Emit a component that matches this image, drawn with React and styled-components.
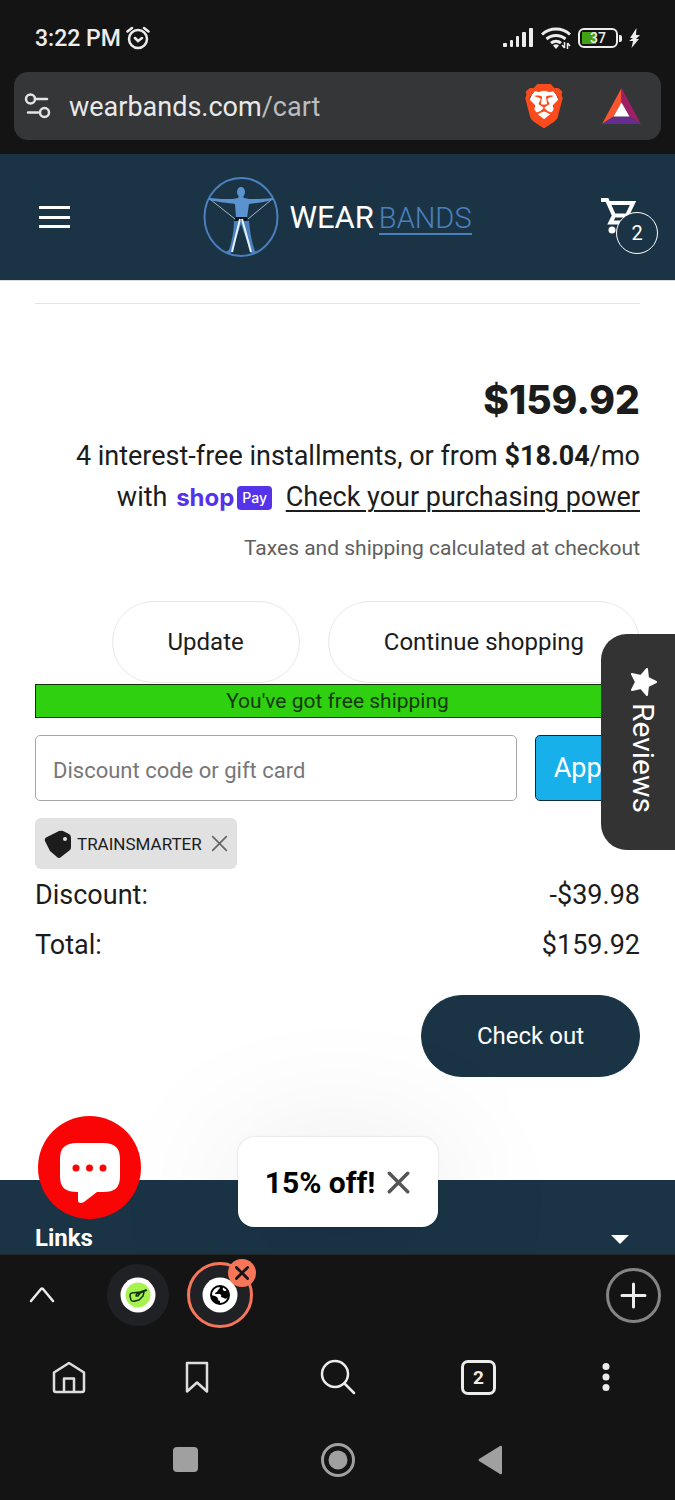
import React, { useState } from 'react';
import styled, { createGlobalStyle } from 'styled-components';
import { SiBrave } from 'react-icons/si';

const GlobalStyle = createGlobalStyle`
  * {
    box-sizing: border-box;
  }
  body {
    margin: 0;
    background-color: #141414;
    font-family: Roboto, 'Liberation Sans', sans-serif;
    color: #1c1c1c;
  }
  button,
  input {
    font-family: inherit;
  }
  svg {
    display: block;
    flex-shrink: 0;
  }
`;

const Screen = styled.div`
  display: flex;
  flex-direction: column;
  min-height: 100vh;
`;

const StatusBar = styled.div`
  display: flex;
  align-items: center;
  justify-content: space-between;
  height: 72px;
  padding: 4px 35px 0;
  color: #ececec;
`;

const StatusGroup = styled.div`
  display: flex;
  align-items: center;
  gap: ${(props) => props.$gap}px;
  font-size: 23px;
  font-weight: 500;
`;

const Battery = styled.div`
  display: flex;
  align-items: center;
  gap: 1px;
`;

const BatteryBody = styled.div`
  display: flex;
  align-items: center;
  justify-content: center;
  width: 40px;
  height: 20px;
  border: 2px solid #ececec;
  border-radius: 6px;
  background: linear-gradient(90deg, #43a012 14px, transparent 14px) no-repeat 2px 2px / 32px 12px;
  font-size: 14px;
  font-weight: 500;
  line-height: 16px;
`;

const BatteryTip = styled.div`
  width: 3px;
  height: 7px;
  border-radius: 0 2px 2px 0;
  background-color: #ececec;
`;

const AddressBar = styled.div`
  display: flex;
  align-items: center;
  height: 68px;
  margin: 0 14px 14px;
  padding: 0 20px 0 10px;
  border-radius: 14px;
  background-color: #343638;
`;

const IconButton = styled.button`
  display: flex;
  align-items: center;
  justify-content: center;
  padding: 0;
  border: none;
  background: none;
  color: inherit;
  cursor: pointer;
`;

const Address = styled.div`
  flex: 1;
  margin-left: 17px;
  padding-top: 2px;
  color: #e9e9e9;
  font-size: 27px;
  span {
    color: #bcbdbe;
  }
`;

const AddressActions = styled.div`
  display: flex;
  align-items: center;
  gap: 36px;
`;

const BraveIcon = styled.div`
  display: flex;
  justify-content: center;
  color: #fb4a1c;
  background: radial-gradient(ellipse 15px 18px at 50% 48%, #fff 98%, transparent);
`;

const WebView = styled.div`
  position: relative;
  display: flex;
  flex: 1;
  flex-direction: column;
  overflow: hidden;
  background-color: #fff;
`;

const Header = styled.header`
  display: grid;
  grid-template-columns: 1fr auto 1fr;
  align-items: center;
  height: 127px;
  padding: 0 17px;
  background-color: #1a3446;
  border-bottom: 1px solid #d9dcdf;
  color: #fff;
`;

const MenuButton = styled(IconButton)`
  justify-self: start;
  margin-left: 21px;
`;

const Logo = styled.a`
  display: flex;
  align-items: center;
  color: #fff;
  text-decoration: none;
`;

const LogoText = styled.span`
  display: flex;
  align-items: flex-start;
  gap: 5px;
  margin-left: 9px;
  padding-top: 4px;
  font-size: 31px;
  font-weight: 400;
  line-height: 30px;
`;

const LogoSecond = styled.span`
  border-bottom: 2px solid #4b80bd;
  color: #4b80bd;
  font-size: 29px;
  font-weight: 300;
`;

const CartLink = styled.a`
  position: relative;
  justify-self: end;
  width: 58px;
  height: 74px;
  padding-top: 17px;
  color: #fff;
  text-decoration: none;
`;

const CartCount = styled.span`
  position: absolute;
  right: 0;
  bottom: 0;
  display: flex;
  align-items: center;
  justify-content: center;
  width: 42px;
  height: 42px;
  border: 1px solid #fff;
  border-radius: 50%;
  background-color: #1a3446;
  font-size: 20px;
`;

const Cart = styled.main`
  flex: 1;
  padding: 22px 35px 103px;
`;

const Divider = styled.hr`
  height: 1px;
  margin: 0 0 71px;
  border: none;
  background-color: #e4e4e4;
`;

const Price = styled.div`
  margin-bottom: 11px;
  font-family: Inter, Roboto, sans-serif;
  font-size: 39px;
  font-weight: 800;
  line-height: 50px;
  text-align: right;
`;

const Installments = styled.div`
  font-size: 27px;
  line-height: 41px;
  text-align: right;
  a {
    color: inherit;
    text-decoration-thickness: 2px;
    text-underline-offset: 4px;
  }
`;

const ShopPay = styled.span`
  display: inline-flex;
  align-items: center;
  gap: 3px;
  margin: 0 7px 0 2px;
  color: #5433eb;
  font-family: Inter, sans-serif;
  font-size: 24px;
  font-weight: 700;
  line-height: 24px;
`;

const PayBadge = styled.span`
  padding: 0 5px;
  border-radius: 4px;
  background-color: #5433eb;
  color: #fff;
  font-size: 14px;
  font-weight: 500;
`;

const Note = styled.p`
  margin: 15px 0 38px;
  color: #606060;
  font-size: 21px;
  line-height: 30px;
  text-align: right;
`;

const ButtonRow = styled.div`
  display: flex;
  justify-content: flex-end;
  gap: 28px;
`;

const PillButton = styled.button`
  height: 82px;
  padding: 0 55px;
  border: 1px solid ${(props) => (props.$filled ? '#1a3446' : '#e8e8e8')};
  border-radius: 41px;
  background-color: ${(props) => (props.$filled ? '#1a3446' : '#fff')};
  color: ${(props) => (props.$filled ? '#fff' : '#1c1c1c')};
  font-size: 24px;
  cursor: pointer;
`;

const ShippingBar = styled.div`
  margin: 1px 0 17px;
  border: 1px solid #10300a;
  background-color: #2fd010;
  color: #16380e;
  font-size: 21px;
  line-height: 32px;
  text-align: center;
`;

const DiscountForm = styled.form`
  display: flex;
  gap: 18px;
`;

const DiscountInput = styled.input`
  flex: 1;
  min-width: 0;
  height: 66px;
  padding: 4px 17px 0;
  border: 1px solid #a6a6a6;
  border-radius: 5px;
  color: #1c1c1c;
  font-size: 22px;
  &::placeholder {
    color: #777;
  }
`;

const ApplyButton = styled.button`
  height: 66px;
  padding: 0 18px;
  border: 1px solid #0c2c3c;
  border-radius: 5px;
  background-color: #17b0ea;
  color: #fff;
  font-size: 27px;
  cursor: pointer;
`;

const Coupon = styled.div`
  display: flex;
  align-items: center;
  gap: 5px;
  width: fit-content;
  height: 51px;
  margin: 17px 0 1px;
  padding: 0 9px;
  border-radius: 6px;
  background-color: #e1e1e1;
  font-size: 17px;
  button {
    margin-left: 4px;
  }
`;

const TotalRow = styled.div`
  display: flex;
  justify-content: space-between;
  font-size: 27px;
  line-height: 50px;
`;

const CheckoutRow = styled.div`
  display: flex;
  justify-content: flex-end;
  margin-top: 25px;
`;

const FooterLinks = styled.button`
  display: flex;
  align-items: flex-end;
  justify-content: space-between;
  height: 74px;
  padding: 0 46px 1px 35px;
  border: none;
  background-color: #1a3446;
  color: #fff;
  font-size: 24px;
  font-weight: 700;
  line-height: 30px;
`;

const Caret = styled.span`
  margin-bottom: 9px;
  border-top: 9px solid #fff;
  border-right: 9px solid transparent;
  border-left: 9px solid transparent;
`;

const ReviewsTab = styled.button`
  position: absolute;
  top: 480px;
  right: 0;
  display: flex;
  align-items: center;
  justify-content: center;
  gap: 6px;
  width: 74px;
  height: 216px;
  padding: 0 0 4px 9px;
  border: none;
  border-radius: 26px 0 0 26px;
  background-color: #333;
  color: #fff;
  font-size: 30px;
  line-height: 34px;
  writing-mode: vertical-rl;
`;

const ChatButton = styled.button`
  position: absolute;
  bottom: 35px;
  left: 38px;
  width: 103px;
  height: 103px;
  padding: 0;
  border: none;
  border-radius: 50%;
  background-color: #f90505;
`;

const Promo = styled.div`
  position: absolute;
  bottom: 27px;
  left: 50%;
  display: flex;
  align-items: center;
  justify-content: center;
  gap: 12px;
  width: 200px;
  height: 90px;
  border-radius: 16px;
  background-color: #fff;
  box-shadow: 0 0 2px rgba(0, 0, 0, 0.2), 0 20px 150px rgba(0, 0, 0, 0.12);
  color: #000;
  font-size: 30px;
  font-weight: 700;
  transform: translateX(-50%);
`;

const BrowserBar = styled.div`
  border-top: 1px solid #23272a;
  color: #ececec;
`;

const TabStrip = styled.div`
  display: flex;
  align-items: center;
  height: 80px;
  padding: 0 14px 0 29px;
`;

const Tab = styled.button`
  position: relative;
  display: flex;
  align-items: center;
  justify-content: center;
  width: ${(props) => (props.$active ? 66 : 62)}px;
  height: ${(props) => (props.$active ? 66 : 62)}px;
  margin-left: ${(props) => (props.$active ? 18 : 52)}px;
  padding: 0;
  border: ${(props) => (props.$active ? '3px solid #f7765a' : 'none')};
  border-radius: 50%;
  background-color: #202124;
`;

const CloseBadge = styled.span`
  position: absolute;
  top: -6px;
  right: -6px;
  display: flex;
  align-items: center;
  justify-content: center;
  width: 28px;
  height: 28px;
  border-radius: 50%;
  background-color: #f7765a;
`;

const NewTab = styled(IconButton)`
  width: 55px;
  height: 55px;
  margin-left: auto;
  border: 3px solid #848484;
  border-radius: 50%;
`;

const Toolbar = styled.nav`
  display: flex;
  align-items: center;
  justify-content: space-between;
  height: 84px;
  padding: 0 51px;
`;

const ToolbarButton = styled(IconButton)`
  width: ${(props) => (props.$wide ? 62 : 36)}px;
`;

const TabCount = styled(IconButton)`
  width: 35px;
  height: 35px;
  border: 3px solid #ececec;
  border-radius: 7px;
  font-size: 19px;
  font-weight: 700;
`;

const SystemNav = styled.div`
  display: flex;
  align-items: center;
  justify-content: center;
  gap: 123px;
  height: 81px;
  color: #a0a0a0;
`;

function CloseIcon({ size, color, width }) {
  return (
    <svg width={size} height={size} viewBox="0 0 20 20" fill="none" stroke={color} strokeWidth={width} strokeLinecap="round">
      <path d="M2 2l16 16M18 2L2 18" />
    </svg>
  );
}

function SignalIcons() {
  return (
    <>
      <svg width="31" height="20" viewBox="0 0 31 20" fill="#ececec">
        <rect x="0" y="15" width="4" height="4" rx="1" />
        <rect x="7" y="12" width="3" height="7" rx="1" />
        <rect x="13" y="8" width="3" height="11" rx="1" />
        <rect x="19" y="4" width="4" height="15" rx="1" />
        <rect x="26" y="0" width="4" height="19" rx="1" />
      </svg>
      <svg width="30" height="22" viewBox="0 0 30 22" fill="none" stroke="#ececec" strokeWidth="3">
        <path d="M1 7.500C9 .2 21 .2 29 7.500" />
        <path d="M5.500 12C11 7.200 19 7.200 24.500 12" />
        <path d="M10 16.200C13 13.700 17 13.700 20 16.200" />
        <path d="M12 18.500a4 4 0 0 1 6 0L15 22z" fill="#ececec" stroke="none" />
        <path d="M23.500 15v6M21 18l2.500 3M26.500 22v-6M29 19l-2.500-3" strokeWidth="1.500" />
      </svg>
    </>
  );
}

function LogoFigure() {
  return (
    <svg width="77" height="82" viewBox="0 0 77 82" fill="none">
      <ellipse cx="38" cy="41" rx="36.500" ry="39" stroke="#4b80bd" strokeWidth="2" />
      <path d="M8 24l24 19M68 24L45 43" stroke="#a9b7bd" strokeWidth="1" />
      <ellipse cx="38" cy="16" rx="4" ry="5" fill="#5b92d0" />
      <path d="M36 20h4l1 2 5 1c8 0 16 0 24-1v2c-8 2-17 3-24 4l-2 14H33l-1-14C25 27 15 26 6 24v-2c9 1 17 1 24 1l5-1z" fill="#5b92d0" />
      <path d="M31 45h15c1 11 3 22 6 30l4 2h-8L38 48 28 77h-7l5-3c3-9 5-20 5-29z" fill="#4b80bd" />
      <path d="M32 41h12v4H32z" fill="#0b1420" />
      <path d="M37 43l-8 33M39 43l9 33" stroke="#e5f2fa" strokeWidth="2" />
    </svg>
  );
}

function App() {
  const [code, setCode] = useState('');

  const handleSubmit = (event) => {
    event.preventDefault();
  };

  return (
    <Screen>
      <GlobalStyle />
      <StatusBar>
        <StatusGroup $gap={5}>
          <span>3:22 PM</span>
          <svg width="24" height="24" viewBox="0 0 24 24" fill="none" stroke="#ececec" strokeWidth="2.500" strokeLinecap="round">
            <circle cx="12" cy="13" r="9" />
            <path d="M1.500 5.500L6 2M22.500 5.500L18 2M9 12l3 3 4-3" />
          </svg>
        </StatusGroup>
        <StatusGroup $gap={7}>
          <SignalIcons />
          <Battery>
            <BatteryBody>37</BatteryBody>
            <BatteryTip />
          </Battery>
          <svg width="11" height="20" viewBox="0 0 11 20" fill="#ececec">
            <path d="M7.500 0L1 10h3L0 13h4l-1.500 7L10 11H7l4-4H7z" />
          </svg>
        </StatusGroup>
      </StatusBar>

      <AddressBar>
        <IconButton aria-label="Site settings">
          <svg width="28" height="26" viewBox="0 0 28 26" fill="none" stroke="#e4e4e4" strokeWidth="2.500" strokeLinecap="round">
            <circle cx="6.500" cy="6" r="4.500" />
            <path d="M12 6h11M4 19.500h10" />
            <circle cx="20.500" cy="19.500" r="4.500" />
          </svg>
        </IconButton>
        <Address>
          wearbands.com<span>/cart</span>
        </Address>
        <AddressActions>
          <IconButton aria-label="Brave Shields">
            <BraveIcon>
              <SiBrave size={44} />
            </BraveIcon>
          </IconButton>
          <IconButton aria-label="Rewards">
            <svg width="39" height="36" viewBox="0 0 39 36">
              <path d="M19.500 0L0 36l11.500-7.500 8-14z" fill="#fb5430" />
              <path d="M19.500 0L39 36l-11.500-7.500-8-14z" fill="#9e1f63" />
              <path d="M0 36h39l-11.500-7.500h-16z" fill="#662d91" />
              <path d="M19.500 14.500l8 14h-16z" fill="#fff" />
            </svg>
          </IconButton>
        </AddressActions>
      </AddressBar>

      <WebView>
        <Header>
          <MenuButton aria-label="Menu">
            <svg width="33" height="24" viewBox="0 0 33 24" stroke="#fff" strokeWidth="3">
              <path d="M1 2.500h31M1 12.500h31M1 21.500h31" />
            </svg>
          </MenuButton>
          <Logo href="#">
            <LogoFigure />
            <LogoText>
              WEAR
              <LogoSecond>BANDS</LogoSecond>
            </LogoText>
          </Logo>
          <CartLink href="#" aria-label="Cart">
            <svg width="38" height="38" viewBox="0 0 38 38" fill="none" stroke="#fff" strokeWidth="4">
              <path d="M1 3h6L14 18.500H27L33 6H9M14 18.500L10.500 25.500H31" />
              <circle cx="12" cy="33" r="3.500" fill="#fff" stroke="none" />
            </svg>
            <CartCount>2</CartCount>
          </CartLink>
        </Header>

        <Cart>
          <Divider />
          <Price>$159.92</Price>
          <Installments>
            4 interest-free installments, or from <b>$18.04</b>/mo
            <br />
            with{' '}
            <ShopPay>
              shop
              <PayBadge>Pay</PayBadge>
            </ShopPay>{' '}
            <a href="#">Check your purchasing power</a>
          </Installments>
          <Note>Taxes and shipping calculated at checkout</Note>
          <ButtonRow>
            <PillButton>Update</PillButton>
            <PillButton>Continue shopping</PillButton>
          </ButtonRow>
          <ShippingBar>You've got free shipping</ShippingBar>
          <DiscountForm onSubmit={handleSubmit}>
            <DiscountInput
              type="text"
              aria-label="Discount code or gift card"
              placeholder="Discount code or gift card"
              value={code}
              onChange={(event) => setCode(event.target.value)}
            />
            <ApplyButton type="submit">Apply</ApplyButton>
          </DiscountForm>
          <Coupon>
            <svg width="28" height="28" viewBox="0 0 28 28">
              <path d="M1 11Q0 8 3 7L15 1Q18 0 21 2l4 2q2 1 2 4v9q0 2-1 3l-9 7q-2 2-4 0L6 21z" fill="#1c1c1c" />
              <circle cx="21" cy="9" r="2" fill="#e1e1e1" />
            </svg>
            TRAINSMARTER
            <IconButton aria-label="Remove discount">
              <CloseIcon size={17} color="#666" width={2} />
            </IconButton>
          </Coupon>
          <TotalRow>
            <span>Discount:</span>
            <span>-$39.98</span>
          </TotalRow>
          <TotalRow>
            <span>Total:</span>
            <span>$159.92</span>
          </TotalRow>
          <CheckoutRow>
            <PillButton $filled>Check out</PillButton>
          </CheckoutRow>
        </Cart>

        <FooterLinks>
          Links
          <Caret />
        </FooterLinks>

        <Promo>
          15% off!
          <IconButton aria-label="Close offer">
            <CloseIcon size={23} color="#555" width={3} />
          </IconButton>
        </Promo>
        <ChatButton aria-label="Chat">
          <svg width="103" height="103" viewBox="0 0 103 103" fill="#fff">
            <path d="M39 27h26c12 0 17 5 17 16v17c0 12-5 16-17 16h-6L46 86c-4 2-6 1-6-2v-8c-13 0-18-4-18-16V43c0-11 5-16 17-16z" />
            <g fill="#f90505">
              <circle cx="38" cy="52" r="3.500" />
              <circle cx="51.500" cy="52" r="3.500" />
              <circle cx="65" cy="52" r="3.500" />
            </g>
          </svg>
        </ChatButton>
        <ReviewsTab>
          <svg width="28" height="30" viewBox="0 0 28 30" fill="#fff" stroke="#fff" strokeWidth="2" strokeLinejoin="round">
            <path d="M27 15l-8 4-1 9-6-7-9 2 4-8-4-8 9 2 6-7 1 9z" />
          </svg>
          Reviews
        </ReviewsTab>
      </WebView>

      <BrowserBar>
        <TabStrip>
          <IconButton aria-label="Expand tabs">
            <svg width="26" height="18" viewBox="0 0 26 18" fill="none" stroke="#ececec" strokeWidth="2.500" strokeLinecap="round">
              <path d="M2 15L12 3q1-1 2 0l10 12" />
            </svg>
          </IconButton>
          <Tab aria-label="First tab">
            <svg width="36" height="36" viewBox="0 0 36 36">
              <circle cx="18" cy="18" r="17.500" fill="#fff" />
              <circle cx="18" cy="18" r="12.500" fill="#a6f34f" />
              <path
                d="M26 13l-6 2-8 1q-2 0-2 3l1 4q1 2 4 1l4-1 4-4 1-4q-2-1-4 1l-2 3h-2q0-3 4-3l7-3"
                fill="none"
                stroke="#14310f"
                strokeWidth="1.500"
                strokeLinejoin="round"
              />
            </svg>
          </Tab>
          <Tab $active aria-label="Current tab">
            <svg width="36" height="36" viewBox="0 0 36 36">
              <circle cx="18" cy="18" r="17.500" fill="#fff" />
              <circle cx="18" cy="18" r="9" fill="#fff" stroke="#000" strokeWidth="2" />
              <path d="M17 9q2 2-1 4l-1 2q-2 0-2 2h5q2 1 1 3l3 1q1 2 5-1 1-4-1-7l-3 1q-3 0-2-4zM9 18l4 1q3 1 3 3t2 2v3q-8-1-9-9z" />
            </svg>
            <CloseBadge>
              <CloseIcon size={14} color="#141414" width={4} />
            </CloseBadge>
          </Tab>
          <NewTab aria-label="New tab">
            <svg width="27" height="27" viewBox="0 0 27 27" stroke="#ececec" strokeWidth="3" strokeLinecap="round">
              <path d="M13.500 2v23M2 13.500h23" />
            </svg>
          </NewTab>
        </TabStrip>
        <Toolbar>
          <ToolbarButton aria-label="Home">
            <svg width="34" height="34" viewBox="0 0 34 34" fill="none" stroke="#dedede" strokeWidth="2.500" strokeLinejoin="round">
              <path d="M2 12.500L17 3l15 9.500V30q0 2-2 2H4q-2 0-2-2zM12 32V18.500h10V32" />
            </svg>
          </ToolbarButton>
          <ToolbarButton aria-label="Bookmarks">
            <svg width="24" height="34" viewBox="0 0 24 34" fill="none" stroke="#dedede" strokeWidth="2.500" strokeLinejoin="round">
              <path d="M2 3h20v28.500l-10-9-10 9z" />
            </svg>
          </ToolbarButton>
          <ToolbarButton $wide aria-label="Search">
            <svg width="36" height="36" viewBox="0 0 36 36" fill="none" stroke="#ececec" strokeWidth="2.500" strokeLinecap="round">
              <circle cx="15" cy="15" r="13" />
              <path d="M24.500 24.500L34 34" />
            </svg>
          </ToolbarButton>
          <TabCount aria-label="Open tabs">2</TabCount>
          <ToolbarButton aria-label="More">
            <svg width="8" height="28" viewBox="0 0 8 28" fill="#ececec">
              <circle cx="4" cy="3.500" r="3.500" />
              <circle cx="4" cy="14" r="3.500" />
              <circle cx="4" cy="24.500" r="3.500" />
            </svg>
          </ToolbarButton>
        </Toolbar>
        <SystemNav>
          <svg width="25" height="25" viewBox="0 0 25 25" fill="currentColor">
            <rect width="25" height="25" rx="4" />
          </svg>
          <svg width="34" height="34" viewBox="0 0 34 34" fill="currentColor">
            <circle cx="17" cy="17" r="15.500" fill="none" stroke="currentColor" strokeWidth="3" />
            <circle cx="17" cy="17" r="9.500" />
          </svg>
          <svg width="25" height="30" viewBox="0 0 25 30" fill="currentColor">
            <path d="M1 14L22 1q2-1 2 1v26q0 2-2 1L1 16q-1-1 0-2z" />
          </svg>
        </SystemNav>
      </BrowserBar>
    </Screen>
  );
}

export default App;
